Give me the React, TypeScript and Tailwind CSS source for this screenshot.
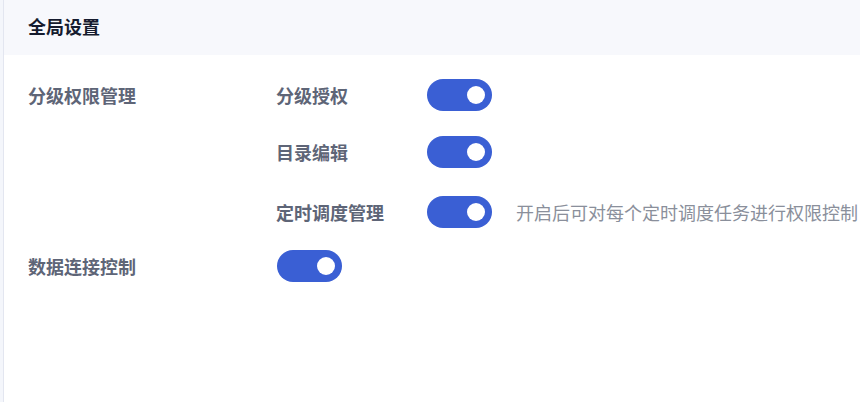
import React from "react";

const FONT = "font-['Noto_Sans_CJK_SC','Noto_Sans',sans-serif]";

const Toggle = () => (
  <div className="relative h-[32px] w-[65px] shrink-0 rounded-full bg-[#3a5fd4]">
    <span className="absolute right-[7px] top-[7px] h-[18px] w-[18px] rounded-full bg-white" />
  </div>
);

const SUB_ITEMS = [
  { label: "分级授权", mt: "mt-[24px]" },
  { label: "目录编辑", mt: "mt-[25px]" },
  { label: "定时调度管理", mt: "mt-[28px]", desc: "开启后可对每个定时调度任务进行权限控制" },
];

export default function App() {
  return (
    <div className={`flex h-[402px] w-[860px] overflow-hidden bg-white ${FONT}`}>
      <div className="w-[4px] shrink-0 border-r border-[#e3e6f0] bg-[#f4f6fb]" />
      <div className="flex flex-1 flex-col">
        <div className="flex h-[55px] items-center bg-[#f7f8fc] pb-[2px] pl-[24px] text-[18px] font-bold text-[#151b2e]">
          全局设置
        </div>
        <div className="flex pl-[24px]">
          <div className="mt-[24px] flex h-[32px] w-[248px] shrink-0 items-center text-[18px] font-bold text-[#5e6577]">
            分级权限管理
          </div>
          <div className="flex flex-col">
            {SUB_ITEMS.map((it) => (
              <div key={it.label} className={`flex h-[32px] items-center ${it.mt}`}>
                <div className="w-[151px] shrink-0 text-[18px] font-bold text-[#5e6577]">{it.label}</div>
                <Toggle />
                {it.desc && (
                  <div className="ml-[24px] whitespace-nowrap text-[18px] text-[#8a8f9b]">{it.desc}</div>
                )}
              </div>
            ))}
          </div>
        </div>
        <div className="mt-[22px] flex h-[32px] items-center pl-[24px]">
          <div className="w-[249px] shrink-0 text-[18px] font-bold text-[#5e6577]">数据连接控制</div>
          <Toggle />
        </div>
      </div>
    </div>
  );
}
